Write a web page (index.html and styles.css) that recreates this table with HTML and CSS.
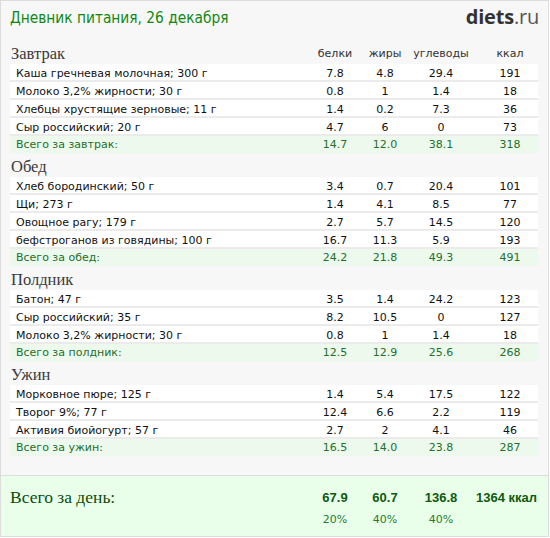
FILE: index.html
```
<!DOCTYPE html>
<html>
<head>
<meta charset="utf-8">
<link rel="stylesheet" href="styles.css">
</head>
<body>
<div class="page">
  <div class="header">
    <div class="title">Дневник питания, 26 декабря</div>
    <div class="logo"><b>diets</b>.ru</div>
  </div>

  <div class="section">
    <div class="head row-grid">
      <div class="sname">Завтрак</div>
      <div class="ch">белки</div><div class="ch">жиры</div><div class="ch">углеводы</div><div class="ch">ккал</div>
    </div>
    <div class="row row-grid"><div class="n">Каша гречневая молочная; 300 г</div><div>7.8</div><div>4.8</div><div>29.4</div><div>191</div></div>
    <div class="row row-grid"><div class="n">Молоко 3,2% жирности; 30 г</div><div>0.8</div><div>1</div><div>1.4</div><div>18</div></div>
    <div class="row row-grid"><div class="n">Хлебцы хрустящие зерновые; 11 г</div><div>1.4</div><div>0.2</div><div>7.3</div><div>36</div></div>
    <div class="row row-grid"><div class="n">Сыр российский; 20 г</div><div>4.7</div><div>6</div><div>0</div><div>73</div></div>
    <div class="total row-grid"><div class="n">Всего за завтрак:</div><div>14.7</div><div>12.0</div><div>38.1</div><div>318</div></div>
  </div>

  <div class="section">
    <div class="head row-grid"><div class="sname">Обед</div></div>
    <div class="row row-grid"><div class="n">Хлеб бородинский; 50 г</div><div>3.4</div><div>0.7</div><div>20.4</div><div>101</div></div>
    <div class="row row-grid"><div class="n">Щи; 273 г</div><div>1.4</div><div>4.1</div><div>8.5</div><div>77</div></div>
    <div class="row row-grid"><div class="n">Овощное рагу; 179 г</div><div>2.7</div><div>5.7</div><div>14.5</div><div>120</div></div>
    <div class="row row-grid"><div class="n">бефстроганов из говядины; 100 г</div><div>16.7</div><div>11.3</div><div>5.9</div><div>193</div></div>
    <div class="total row-grid"><div class="n">Всего за обед:</div><div>24.2</div><div>21.8</div><div>49.3</div><div>491</div></div>
  </div>

  <div class="section">
    <div class="head row-grid"><div class="sname">Полдник</div></div>
    <div class="row row-grid"><div class="n">Батон; 47 г</div><div>3.5</div><div>1.4</div><div>24.2</div><div>123</div></div>
    <div class="row row-grid"><div class="n">Сыр российский; 35 г</div><div>8.2</div><div>10.5</div><div>0</div><div>127</div></div>
    <div class="row row-grid"><div class="n">Молоко 3,2% жирности; 30 г</div><div>0.8</div><div>1</div><div>1.4</div><div>18</div></div>
    <div class="total row-grid"><div class="n">Всего за полдник:</div><div>12.5</div><div>12.9</div><div>25.6</div><div>268</div></div>
  </div>

  <div class="section">
    <div class="head row-grid"><div class="sname">Ужин</div></div>
    <div class="row row-grid"><div class="n">Морковное пюре; 125 г</div><div>1.4</div><div>5.4</div><div>17.5</div><div>122</div></div>
    <div class="row row-grid"><div class="n">Творог 9%; 77 г</div><div>12.4</div><div>6.6</div><div>2.2</div><div>119</div></div>
    <div class="row row-grid"><div class="n">Активия биойогурт; 57 г</div><div>2.7</div><div>2</div><div>4.1</div><div>46</div></div>
    <div class="total row-grid"><div class="n">Всего за ужин:</div><div>16.5</div><div>14.0</div><div>23.8</div><div>287</div></div>
  </div>

  <div class="day">
    <div class="day-grid">
      <div class="day-label">Всего за день:</div>
      <div class="dv">67.9</div><div class="dv">60.7</div><div class="dv">136.8</div><div class="dv kcal">1364 ккал</div>
      <div></div>
      <div class="pct">20%</div><div class="pct">40%</div><div class="pct">40%</div><div></div>
    </div>
  </div>
</div>
</body>
</html>
```

FILE: styles.css
```
html, body {
  margin: 0;
  padding: 0;
  background: #ffffff;
}
.page {
  width: 547px;
  height: 535px;
  border: 1px solid #dcdcdc;
  background: #f7f7f7;
  font-family: "DejaVu Sans", Verdana, sans-serif;
  font-size: 11px;
  color: #111;
  display: flex;
  flex-direction: column;
}
.header {
  height: 39px;
  flex: none;
  display: flex;
  justify-content: space-between;
  align-items: flex-start;
  padding: 0 9px 0 9px;
  box-sizing: border-box;
}
.title {
  margin-top: 7px;
  font-family: "DejaVu Sans Condensed", "DejaVu Sans", sans-serif;
  font-stretch: condensed;
  font-size: 15.3px;
  line-height: 20px;
  color: #118811;
}
.logo {
  margin-top: 4px;
  font-family: "Open Sans", "DejaVu Sans", sans-serif;
  font-size: 20px;
  line-height: 24px;
  color: #555;
  letter-spacing: -0.2px;
}
.logo b {
  color: #333;
  font-weight: 700;
}
.section {
  margin: 0 10px 0 9px;
}
.row-grid {
  display: grid;
  grid-template-columns: 300px 50px 50px 62px 11px 54px;
  align-items: center;
}
.row-grid > div {
  text-align: center;
}
.row-grid > div:nth-child(5) {
  grid-column: 6;
}
.row-grid > .n, .row-grid > .sname {
  text-align: left;
}
.head {
  height: 24px;
  padding-top: 4px;
  box-sizing: border-box;
  line-height: 20px;
}
.sname {
  font-family: "Liberation Serif", Georgia, serif;
  font-size: 16.5px;
  color: #3a3a3a;
  padding-left: 1px;
}
.ch {
  color: #333;
  font-size: 11px;
}
.row {
  height: 18px;
  padding-top: 2px;
  line-height: 15px;
  background: #fff;
  border-bottom: 2px solid #ebebeb;
  box-sizing: border-box;
}
.row .n, .total .n {
  padding-left: 6px;
}
.total {
  height: 17px;
  line-height: 18px;
  background: #eef9ee;
  color: #22702a;
}
.day {
  margin-top: auto;
  height: 60px;
  flex: none;
  border-top: 1px solid #dcdcdc;
  background: #eaffea;
  padding: 0 10px 0 9px;
}
.day-grid {
  display: grid;
  grid-template-columns: 300px 50px 50px 62px 65px;
  grid-template-rows: 22px 22px;
  padding-top: 10px;
  align-items: center;
}
.day-label {
  font-family: "Liberation Serif", Georgia, serif;
  font-size: 17.5px;
  color: #0b4d0b;
}
.dv {
  text-align: center;
  font-family: "Liberation Sans", Arial, sans-serif;
  font-weight: bold;
  font-size: 13px;
  color: #0f5a0f;
}
.dv.kcal {
  text-align: right;
  white-space: nowrap;
}
.pct {
  text-align: center;
  color: #2a7a2a;
  font-size: 11px;
}
```
